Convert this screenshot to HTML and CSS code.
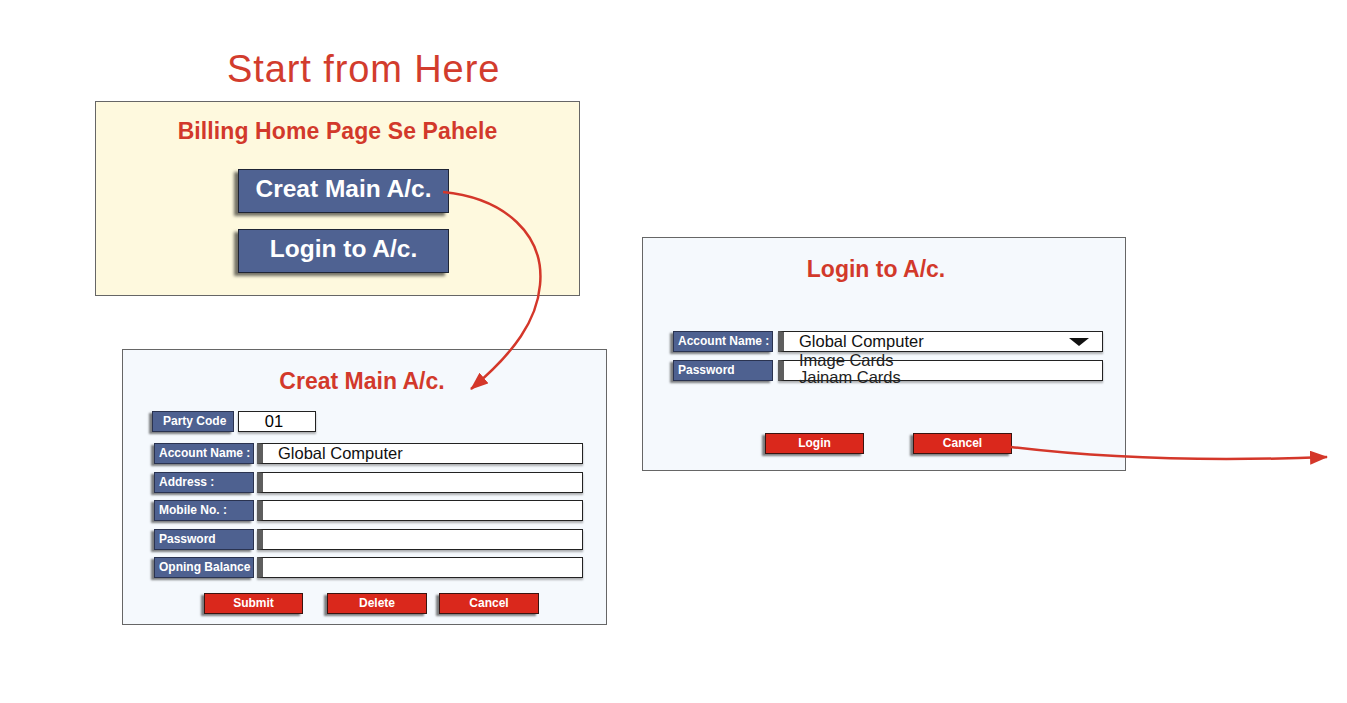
FILE: index.html
```html
<!DOCTYPE html>
<html lang="en">
<head>
    <meta charset="UTF-8">
    <meta name="viewport" content="width=device-width, initial-scale=1.0">
    <title>Billing - Account Flow</title>
    <link rel="stylesheet" href="styles.css">
</head>
<body>
    <div class="canvas">
        <h1 class="start-title">Start from Here</h1>

        <!-- Home screen before billing -->
        <section class="panel home">
            <h2 class="panel-title">Billing Home Page Se Pahele</h2>
            <div class="home-actions">
                <button type="button" class="big-btn">Creat Main A/c.</button>
                <button type="button" class="big-btn">Login to A/c.</button>
            </div>
        </section>

        <!-- Create account form -->
        <section class="panel form-panel create">
            <h2 class="panel-title">Creat Main A/c.</h2>
            <div class="row party-row">
                <div class="label">Party Code</div>
                <div class="code-box">01</div>
            </div>
            <div class="rows">
                <div class="row">
                    <div class="label">Account Name :</div>
                    <div class="field">Global Computer</div>
                </div>
                <div class="row">
                    <div class="label">Address :</div>
                    <div class="field"></div>
                </div>
                <div class="row">
                    <div class="label">Mobile No. :</div>
                    <div class="field"></div>
                </div>
                <div class="row">
                    <div class="label">Password</div>
                    <div class="field"></div>
                </div>
                <div class="row">
                    <div class="label">Opning Balance</div>
                    <div class="field"></div>
                </div>
            </div>
            <div class="actions">
                <button type="button" class="red-btn submit">Submit</button>
                <button type="button" class="red-btn delete">Delete</button>
                <button type="button" class="red-btn cancel">Cancel</button>
            </div>
        </section>

        <!-- Login form -->
        <section class="panel form-panel login">
            <h2 class="panel-title">Login to A/c.</h2>
            <div class="rows">
                <div class="row">
                    <div class="label">Account Name :</div>
                    <div class="field select">
                        Global Computer
                        <span class="caret"></span>
                        <ul class="options">
                            <li>Image Cards</li>
                            <li>Jainam Cards</li>
                        </ul>
                    </div>
                </div>
                <div class="row">
                    <div class="label">Password</div>
                    <div class="field"></div>
                </div>
            </div>
            <div class="actions">
                <button type="button" class="red-btn">Login</button>
                <button type="button" class="red-btn cancel">Cancel</button>
            </div>
        </section>

        <!-- Flow arrows between screens -->
        <svg class="flow-arrows" width="1347" height="703" viewBox="0 0 1347 703">
            <defs>
                <marker id="head" viewBox="0 0 18 14" refX="17" refY="7" markerWidth="18" markerHeight="14" markerUnits="userSpaceOnUse" orient="auto">
                    <path d="M0,0 L18,7 L0,14 z" fill="#d4372a"/>
                </marker>
            </defs>
            <path d="M443,192 C505,198 545,235 540,285 C537,320 515,352 471,389" fill="none" stroke="#d4372a" stroke-width="2.5" marker-end="url(#head)"/>
            <path d="M1011,447 C1100,458 1200,462 1327,457" fill="none" stroke="#d4372a" stroke-width="2.5" marker-end="url(#head)"/>
        </svg>
    </div>
</body>
</html>
```

FILE: styles.css
```css
body {
    margin: 0;
    background-color: #fff;
    font-family: "Liberation Sans", Arial, sans-serif;
}
.canvas {
    position: relative;
    width: 1347px;
    height: 703px;
    overflow: hidden;
}
.start-title {
    position: absolute;
    left: 227px;
    top: 51px;
    margin: 0;
    font-size: 38px;
    font-weight: normal;
    line-height: 36px;
    letter-spacing: 0.9px;
    color: #d23c2d;
}
.panel {
    position: absolute;
    box-sizing: border-box;
    border: 1px solid #666;
}
.panel-title {
    margin: 0;
    font-size: 23px;
    line-height: 26px;
    font-weight: bold;
    color: #d2392b;
    text-align: center;
}

/* home screen */
.home {
    left: 95px;
    top: 101px;
    width: 485px;
    height: 195px;
    padding-top: 16px;
    background: #fef9de;
}
.home .panel-title {
    letter-spacing: 0.1px;
}
.home-actions {
    display: flex;
    flex-direction: column;
    align-items: center;
    gap: 16px;
    margin-top: 25px;
    padding-left: 12px;
}
.big-btn {
    width: 211px;
    height: 44px;
    padding: 0 0 5px;
    background: #4f6292;
    border: 1px solid #1f2535;
    box-shadow: -4px 3px 3px rgba(0, 0, 0, 0.55);
    color: #fff;
    font-family: inherit;
    font-size: 24.5px;
    font-weight: bold;
}

/* form screens */
.form-panel {
    background: #f5f9fd;
}
.create {
    left: 122px;
    top: 349px;
    width: 485px;
    height: 276px;
    padding-top: 18px;
}
.create .panel-title {
    padding-right: 5px;
}
.login {
    left: 642px;
    top: 237px;
    width: 484px;
    height: 234px;
    padding-top: 18px;
}
.login .panel-title {
    padding-right: 16px;
}
.rows {
    display: flex;
    flex-direction: column;
}
.row {
    display: flex;
    gap: 3px;
}
.label {
    box-sizing: border-box;
    width: 100px;
    height: 21px;
    padding-left: 4px;
    background: #4e6190;
    border: 1px solid #2a3350;
    box-shadow: -3px 2px 2px rgba(0, 0, 0, 0.5);
    color: #fff;
    font-size: 12px;
    font-weight: bold;
    line-height: 19px;
    white-space: nowrap;
}
.field {
    position: relative;
    box-sizing: border-box;
    width: 326px;
    height: 21px;
    padding-left: 15px;
    background: #fff;
    border: 1px solid #222;
    border-left: 6px solid #5e5e5e;
    box-shadow: 0 2px 2px rgba(0, 0, 0, 0.3);
    color: #111;
    font-size: 16.5px;
    line-height: 19px;
}
.party-row {
    gap: 4px;
    margin: 17px 0 0 29px;
}
.party-row .label {
    width: 82px;
    padding-left: 10px;
}
.code-box {
    box-sizing: border-box;
    width: 78px;
    height: 21px;
    padding-right: 6px;
    background: #fff;
    border: 1px solid #222;
    box-shadow: 0 2px 2px rgba(0, 0, 0, 0.3);
    font-size: 16.5px;
    line-height: 19px;
    text-align: center;
}
.create .rows {
    gap: 7.5px;
    margin: 11px 0 0 31px;
}
.login .rows {
    gap: 8px;
    margin: 49px 0 0 30px;
}
.login .row {
    gap: 5px;
}
.login .field {
    width: 325px;
}

/* dropdown */
.select .caret {
    position: absolute;
    right: 13px;
    top: 6px;
    width: 0;
    height: 0;
    border-left: 10px solid transparent;
    border-right: 10px solid transparent;
    border-top: 8px solid #111;
}
.options {
    position: absolute;
    left: 15px;
    top: 20px;
    margin: 0;
    padding: 0;
    list-style: none;
    line-height: 17px;
    color: #222;
    z-index: 1;
}

/* buttons */
.actions {
    display: flex;
}
.red-btn {
    width: 99px;
    height: 21px;
    padding: 0 0 2px;
    background: #da281c;
    border: 1px solid #3a1410;
    box-shadow: -3px 2px 2px rgba(0, 0, 0, 0.5);
    color: #fff;
    font-family: inherit;
    font-size: 12px;
    font-weight: bold;
}
.create .actions {
    margin: 15px 0 0 81px;
}
.create .delete {
    margin-left: 24px;
    width: 100px;
}
.create .cancel {
    margin-left: 12px;
    width: 100px;
}
.login .actions {
    margin: 52px 0 0 122px;
}
.login .cancel {
    margin-left: 49px;
}

.flow-arrows {
    position: absolute;
    left: 0;
    top: 0;
    pointer-events: none;
    z-index: 2;
}
```
